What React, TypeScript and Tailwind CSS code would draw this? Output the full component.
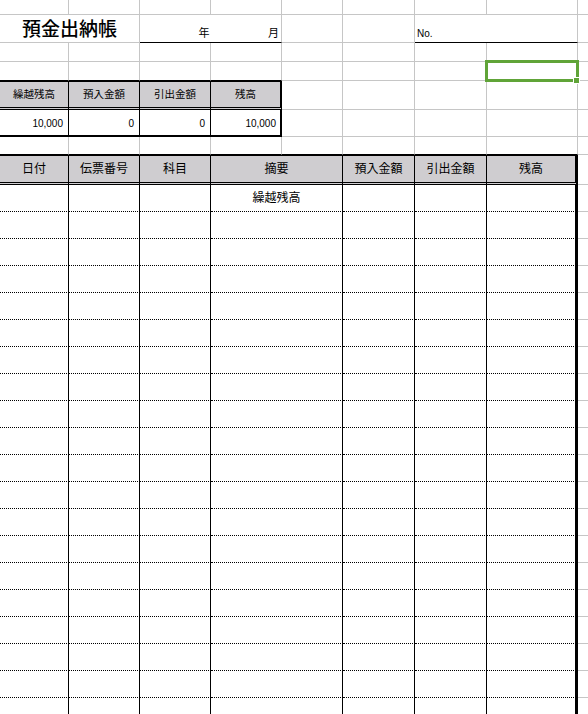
const COL = [
  "w-[69px]",
  "w-[71px]",
  "w-[71px]",
  "w-[71px]",
  "w-[61px]",
  "w-[72px]",
  "w-[72px]",
  "w-[91px]",
];

const grid = "border-r border-b border-[#c6c6c6]";

function Gray({ cols }: { cols: number[] }) {
  return (
    <>
      {cols.map((i) => (
        <div key={i} className={`${COL[i]} shrink-0 ${grid}`} />
      ))}
    </>
  );
}

function Filler() {
  return <div className="flex-1 border-b border-[#c6c6c6]" />;
}

const summaryHead = ["繰越残高", "預入金額", "引出金額", "残高"];
const summaryVals = ["10,000", "0", "0", "10,000"];

const ledgerHead = [
  { label: "日付", w: "w-[69px]" },
  { label: "伝票番号", w: "w-[71px]" },
  { label: "科目", w: "w-[71px]" },
  { label: "摘要", w: "w-[132px]" },
  { label: "預入金額", w: "w-[72px]" },
  { label: "引出金額", w: "w-[72px]" },
  { label: "残高", w: "w-[91px]" },
];

const rows = Array.from({ length: 20 }, (_, i) => i);

export default function App() {
  return (
    <div className="w-[588px] h-[714px] overflow-hidden bg-white text-black font-['Liberation_Sans','Noto_Sans_CJK_JP',sans-serif]">
      {/* row 1 */}
      <div className="flex h-[15px]">
        <Gray cols={[0, 1, 2, 3, 4, 5, 6, 7]} />
        <Filler />
      </div>

      {/* title row */}
      <div className="flex h-[28px]">
        <div className={`w-[140px] shrink-0 ${grid} flex items-center justify-center pt-[2px]`}>
          <span className="text-[19px] font-medium leading-none tracking-[0px]">預金出納帳</span>
        </div>
        <div className="w-[142px] shrink-0 flex items-end border-r border-r-[#c6c6c6] border-b border-b-black">
          <div className="w-[71px] text-right text-[11px] leading-none pb-[3px] pr-[1px]">年</div>
          <div className="w-[71px] text-right text-[11px] leading-none pb-[3px] pr-[2px]">月</div>
        </div>
        <Gray cols={[4, 5]} />
        <div className="w-[163px] shrink-0 flex items-end border-r border-r-[#c6c6c6] border-b border-b-black">
          <span className="text-[10px] leading-none pb-[3px] pl-[2px]">No.</span>
        </div>
        <Filler />
      </div>

      <div className="flex h-[19px]">
        <Gray cols={[0, 1, 2, 3, 4, 5, 6, 7]} />
        <Filler />
      </div>

      {/* row above summary, with selected cell */}
      <div className="flex h-[19px]">
        {[0, 1, 2, 3].map((i) => (
          <div key={i} className={`${COL[i]} shrink-0 border-r border-r-[#c6c6c6] border-b border-b-black`} />
        ))}
        <Gray cols={[4, 5, 6]} />
        <div className={`${COL[7]} shrink-0 ${grid} relative`}>
          <div className="absolute -left-[2px] -top-[2px] w-[94px] h-[22px] border-[3px] border-[#60a438]" />
          <div className="absolute left-[86px] top-[15px] w-[7px] h-[7px] bg-[#60a438] border border-white" />
        </div>
        <Filler />
      </div>

      {/* summary header */}
      <div className="flex h-[29px]">
        {summaryHead.map((t, i) => (
          <div
            key={t}
            className={`${COL[i]} shrink-0 bg-[#cfcdd0] border-t border-b-[3px] [border-bottom-style:double] border-black ${
              i === 3 ? "border-r-2" : "border-r"
            } flex items-center justify-center text-[10.5px]`}
          >
            {t}
          </div>
        ))}
        <Gray cols={[4, 5, 6, 7]} />
        <Filler />
      </div>

      {/* summary values */}
      <div className="flex h-[27px]">
        {summaryVals.map((v, i) => (
          <div
            key={i}
            className={`${COL[i]} shrink-0 border-b-2 border-black ${
              i === 3 ? "border-r-2 pr-[4px]" : "border-r pr-[5px]"
            } flex items-center justify-end pt-[2px] text-[10px]`}
          >
            {v}
          </div>
        ))}
        <Gray cols={[4, 5, 6, 7]} />
        <Filler />
      </div>

      {/* gap row */}
      <div className="flex h-[18px]">
        {[0, 1, 2, 3, 4, 5, 6, 7].map((i) => (
          <div key={i} className={`${COL[i]} shrink-0 border-r border-r-[#c6c6c6] border-b border-b-black`} />
        ))}
        <Filler />
      </div>

      {/* ledger header */}
      <div className="flex h-[30px]">
        {ledgerHead.map((c, i) => (
          <div
            key={c.label}
            className={`${c.w} shrink-0 bg-[#cfcdd0] border-t border-b-[3px] [border-bottom-style:double] border-black ${
              i === 6 ? "border-r-[3px]" : "border-r"
            } flex items-center justify-center text-[12px]`}
          >
            {c.label}
          </div>
        ))}
        <Filler />
      </div>

      {/* ledger rows */}
      {rows.map((r) => (
        <div key={r} className="flex h-[27px]">
          {ledgerHead.map((c, i) => (
            <div
              key={i}
              className={`${c.w} shrink-0 border-b [border-bottom-style:dotted] border-black ${
                i === 6 ? "border-r-[3px]" : "border-r"
              } flex items-center justify-center text-[12px]`}
            >
              {r === 0 && i === 3 ? "繰越残高" : null}
            </div>
          ))}
          <Filler />
        </div>
      ))}
    </div>
  );
}
